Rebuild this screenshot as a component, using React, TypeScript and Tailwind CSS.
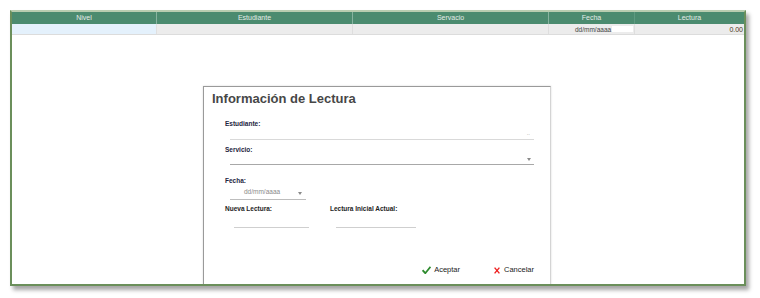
import React from "react";

const font = { fontFamily: '"Liberation Sans", Arial, sans-serif' };

function Caret() {
  return (
    <span className="block w-0 h-0 border-l-[2px] border-r-[2px] border-t-[3px] border-l-transparent border-r-transparent border-t-[#8a8a8a]"></span>
  );
}

export default function App() {
  return (
    <div className="w-[760px] h-[298px] bg-white pt-[10px] pl-[10px]" style={font}>
      <div className="relative w-[736px] h-[276px] border-2 border-[#6b8f5b] border-t-[#b9cdb0] bg-white overflow-hidden shadow-[3px_4px_4px_rgba(0,0,0,0.35)]">
        {/* header */}
        <div className="flex h-[12px] bg-[#4b8b6f] text-[7px] leading-[12px] text-[#e3ece7]">
          <div className="w-[145px] text-center border-r border-[#86b39f]">Nivel</div>
          <div className="w-[196px] text-center border-r border-[#86b39f]">Estudiante</div>
          <div className="w-[196px] text-center border-r border-[#86b39f]">Servacio</div>
          <div className="w-[86px] text-center border-r border-[#5e9a80]">Fecha</div>
          <div className="flex-1 text-center">Lectura</div>
        </div>
        {/* row */}
        <div className="flex h-[11px] bg-[#ececec] border-b border-[#dcdcdc] text-[7px] leading-[11px] text-[#333]">
          <div className="w-[145px] bg-[#e4f1fc] border-r border-[#e0e0e0]"></div>
          <div className="w-[196px] border-r border-[#dedede]"></div>
          <div className="w-[196px] border-r border-[#dedede]"></div>
          <div className="w-[86px] flex items-center border-r border-[#dedede]">
            <span className="ml-[26px] text-[6.5px] text-[#444]">dd/mm/aaaa</span>
            <span className="ml-[1px] w-[21px] h-[6px] bg-white"></span>
          </div>
          <div className="flex-1 text-right pr-[1px] text-[#4a3520]">0.00</div>
        </div>

        {/* modal */}
        <div className="absolute left-[191px] top-[74px] w-[348px] h-[212px] bg-white border border-[#9a9a9a] border-r-[#d4d4d4] shadow-[0_0_2px_rgba(0,0,0,0.15)]">
          <div className="pl-[8px] pt-[2px] text-[13px] font-bold text-[#474747] leading-[20px]">
            Información de Lectura
          </div>
          <div className="pl-[21px] pr-[16px] text-[6.5px]">
            <div className="mt-[11px] font-bold text-[#1d2440] leading-[8px]">Estudiante:</div>
            <div className="ml-[5px] h-[12px] border-b border-[#d9d9d9] flex items-end justify-end pb-[3px] pr-[4px] text-[#999] text-[6px] leading-[6px]">..</div>
            <div className="mt-[6px] font-bold text-[#1d2440] leading-[8px]">Servicio:</div>
            <div className="ml-[5px] h-[11px] border-b border-[#a8a8a8] flex items-end justify-end pb-[3px] pr-[3px]">
              <Caret />
            </div>
            <div className="mt-[12px] font-bold text-[#1d2440] leading-[8px]">Fecha:</div>
            <div className="ml-[5px] w-[76px] h-[15px] border-b border-[#bdbdbd] flex items-center">
              <span className="ml-[14px] text-[#8a8a8a] text-[6.5px] leading-[8px]">dd/mm/aaaa</span>
              <span className="ml-auto mr-[4px] mt-[2px]">
                <Caret />
              </span>
            </div>
            <div className="flex mt-[5px]">
              <div className="w-[105px]">
                <div className="font-bold text-[#1d1d1d] leading-[8px]">Nueva Lectura:</div>
                <div className="ml-[9px] w-[75px] h-[15px] border-b border-[#cfcfcf]"></div>
              </div>
              <div>
                <div className="font-bold text-[#1d1d1d] leading-[8px]">Lectura Inicial Actual:</div>
                <div className="ml-[6px] w-[80px] h-[15px] border-b border-[#cfcfcf]"></div>
              </div>
            </div>
            <div className="flex justify-end items-center h-[10px] mt-[37px] text-[7.5px] text-[#1a1a1a]">
              <div className="flex items-center gap-[3px] mr-[34px]">
                <svg width="9" height="8" viewBox="0 0 9 8">
                  <path d="M0.6 4.2 L3.3 7.2 L8.5 0.8" fill="none" stroke="#2e8b2e" strokeWidth="1.8" />
                </svg>
                <span>Aceptar</span>
              </div>
              <div className="flex items-center gap-[4px]">
                <svg width="6" height="7" viewBox="0 0 6 7">
                  <path d="M0.6 0.6 L5.4 6.4 M5.4 0.6 L0.6 6.4" fill="none" stroke="#e22" strokeWidth="1.4" />
                </svg>
                <span>Cancelar</span>
              </div>
            </div>
          </div>
        </div>
      </div>
    </div>
  );
}
